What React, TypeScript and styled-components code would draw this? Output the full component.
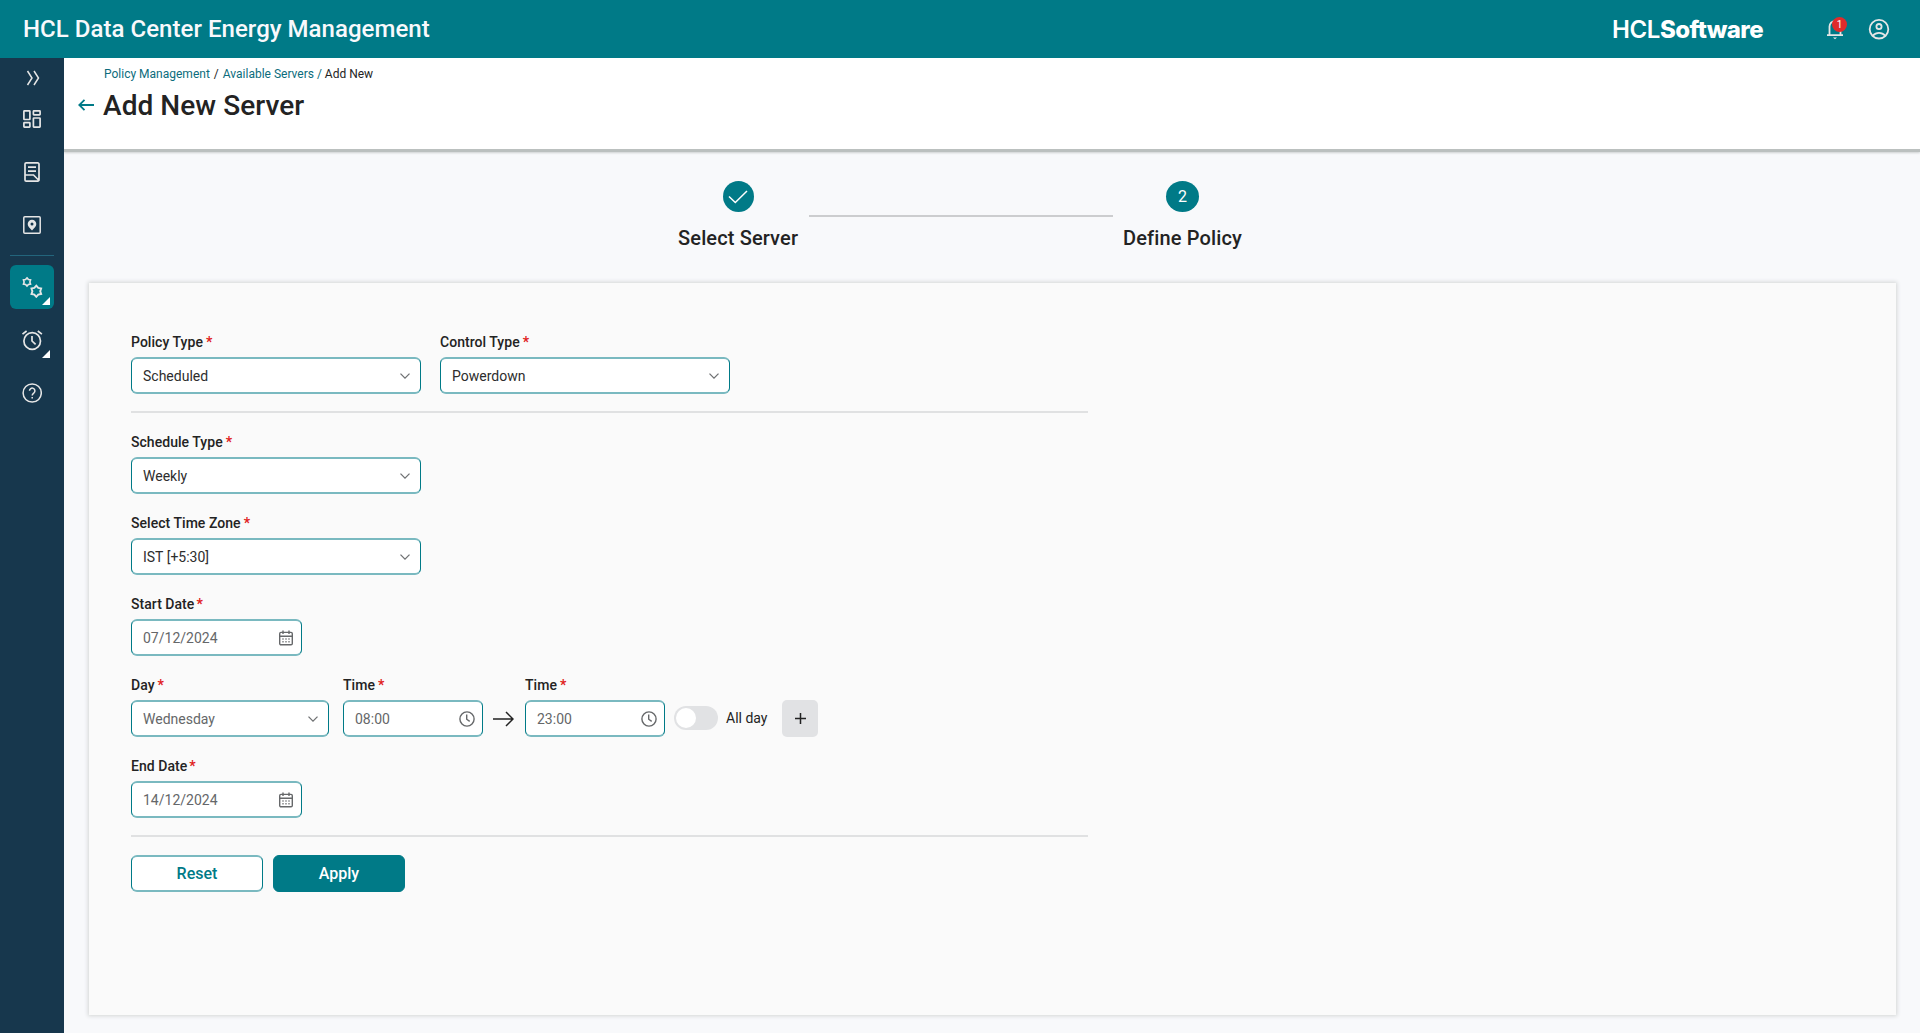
import React from "react";
import styled, { createGlobalStyle } from "styled-components";

const teal = "#007a87";
const edge = "#7ab9c0";

const GlobalStyle = createGlobalStyle`
  *, *::before, *::after { box-sizing: border-box; }
  html, body { margin: 0; padding: 0; }
  body { font-family: Roboto, "Liberation Sans", sans-serif; color: #232323; background: #f8f9fb; }
  button { font-family: inherit; padding: 0; cursor: pointer; }
  svg { display: block; flex: none; }
`;

const Page = styled.div`
  display: flex;
  flex-direction: column;
  width: 1920px;
  height: 1033px;
  overflow: hidden;
`;

const TopBar = styled.header`
  display: flex;
  align-items: center;
  flex: none;
  height: 58px;
  padding: 0 30px 0 23px;
  background: ${teal};
  color: #f8f9fc;
`;

const AppTitle = styled.div`
  flex: 1;
  font-size: 24px;
  line-height: 28px;
  font-weight: 500;
  letter-spacing: 0.04px;
`;

const Brand = styled.div`
  width: 151px;
  margin-right: 61px;
  padding-top: 1px;
  font-family: Inter, sans-serif;
  font-size: 24px;
  line-height: 28px;
  font-weight: 600;
  letter-spacing: -0.4px;
  color: #fff;
  white-space: nowrap;
`;

const BrandStrong = styled.span`
  font-weight: 800;
  letter-spacing: -0.6px;
`;

const BellButton = styled.div`
  position: relative;
  width: 24px;
  height: 24px;
  margin-right: 20px;
`;

const Badge = styled.span`
  position: absolute;
  left: 8px;
  top: 0;
  width: 15px;
  height: 15px;
  border-radius: 50%;
  background: #e02b2b;
  color: #fff;
  font-size: 10px;
  line-height: 15px;
  text-align: center;
`;

const Body = styled.div`
  display: flex;
  flex: 1;
  min-height: 0;
`;

const Sidebar = styled.nav`
  position: relative;
  z-index: 1;
  display: flex;
  flex-direction: column;
  align-items: center;
  flex: none;
  width: 64px;
  padding-top: 10px;
  background: #17374d;
`;

const ExpandItem = styled.div`
  display: flex;
  align-items: center;
  justify-content: center;
  width: 44px;
  height: 20px;
  margin-bottom: 9px;
  padding-left: 2px;
`;

const NavItem = styled.div<{ $active?: boolean }>`
  position: relative;
  display: flex;
  align-items: center;
  justify-content: center;
  width: 44px;
  height: 44px;
  margin-bottom: 9px;
  border-radius: 6px;
  background: ${(p) => (p.$active ? teal : "transparent")};
`;

const SubmenuMark = styled.span`
  position: absolute;
  right: 4px;
  bottom: 4px;
  width: 8px;
  height: 8px;
  background: #fff;
  clip-path: polygon(100% 0, 100% 100%, 0 100%);
`;

const NavDivider = styled.div`
  width: 44px;
  height: 1px;
  margin: -1px 0 9px;
  background: #23657c;
`;

const Main = styled.main`
  display: flex;
  flex-direction: column;
  flex: 1;
  min-width: 0;
`;

const PageHeader = styled.div`
  flex: none;
  height: 91px;
  padding: 8px 15px 0 14px;
  background: #fff;
  box-shadow: 0 3px 0 #bbc0bf, 0 4px 2px #cdd1d1;
`;

const Crumbs = styled.div`
  display: flex;
  padding-left: 26px;
  font-size: 12px;
  line-height: 16px;
`;

const CrumbLink = styled.a`
  color: #0c6c7c;
  white-space: pre;
`;

const Crumb = styled.span`
  white-space: pre;
`;

const CrumbSlash = styled.span`
  margin: 0 4px;
`;

const TitleRow = styled.div`
  display: flex;
  align-items: center;
  gap: 9px;
  height: 34px;
  margin-top: 6px;
`;

const PageTitle = styled.h1`
  margin: 0;
  padding-top: 1px;
  font-size: 28px;
  line-height: 34px;
  font-weight: 500;
  letter-spacing: 0.06px;
`;

const Stepper = styled.div`
  display: flex;
  justify-content: center;
  flex: none;
  margin-top: 32px;
  padding-right: 64px;
`;

const Step = styled.div`
  display: flex;
  flex-direction: column;
  align-items: center;
`;

const StepCircle = styled.div<{ $size: number }>`
  display: flex;
  align-items: center;
  justify-content: center;
  width: ${(p) => p.$size}px;
  height: 31px;
  border-radius: 50%;
  background: ${teal};
  color: #fff;
  font-size: 16px;
`;

const StepLabel = styled.div`
  margin-top: 14px;
  font-size: 20px;
  line-height: 24px;
  font-weight: 500;
  letter-spacing: 0.13px;
  white-space: nowrap;
`;

const StepLine = styled.div`
  width: 304px;
  height: 2px;
  margin: 34px 10px 0 11px;
  background: #cccdcf;
`;

const Card = styled.section`
  flex: none;
  height: 732px;
  margin: 33px 24px 0 25px;
  padding: 50px 42px 0;
  background: #fafafa;
  box-shadow: 0 0 4px 1px #d3d5d6;
`;

const Form = styled.form`
  display: flex;
  flex-direction: column;
  width: 957px;
`;

const Row = styled.div<{ $after?: number }>`
  display: flex;
  align-items: flex-end;
  margin-bottom: ${(p) => p.$after ?? 20}px;
`;

const Field = styled.div<{ $width: number; $gap?: number }>`
  display: flex;
  flex-direction: column;
  width: ${(p) => p.$width}px;
  margin-right: ${(p) => p.$gap ?? 0}px;
`;

const Label = styled.label`
  height: 24px;
  font-size: 14px;
  line-height: 18px;
  font-weight: 500;
  letter-spacing: 0.04px;
`;

const Star = styled.span<{ $offset: number }>`
  margin-left: ${(p) => p.$offset}px;
  color: #e02020;
  font-weight: 700;
`;

const Control = styled.div<{ $muted?: boolean; $end: number }>`
  display: flex;
  align-items: center;
  justify-content: space-between;
  height: 37px;
  padding: 0 ${(p) => p.$end}px 0 11px;
  border: solid;
  border-width: 2px 1px;
  border-color: ${edge} ${teal};
  border-radius: 6px;
  background: #fff;
  color: ${(p) => (p.$muted ? "#656769" : "#2d2d2d")};
  font-size: 14px;
`;

const Rule = styled.div<{ $after: number }>`
  height: 2px;
  margin-bottom: ${(p) => p.$after}px;
  background: #e0e1e2;
`;

const Inline = styled.div<{ $gap: number; $lift?: number }>`
  display: flex;
  align-items: center;
  height: 37px;
  margin-right: ${(p) => p.$gap}px;
  padding-bottom: ${(p) => p.$lift ?? 0}px;
  font-size: 14px;
`;

const Toggle = styled.div`
  width: 44px;
  height: 24px;
  padding: 2px;
  border-radius: 12px;
  background: #e1e2e4;
`;

const Knob = styled.div`
  width: 20px;
  height: 20px;
  border-radius: 50%;
  background: #fff;
`;

const AddButton = styled.button`
  display: flex;
  align-items: center;
  justify-content: center;
  width: 36px;
  height: 37px;
  border: 0;
  border-radius: 5px;
  background: #e1e2e4;
`;

const Actions = styled.div`
  display: flex;
  gap: 10px;
`;

const Action = styled.button<{ $primary?: boolean }>`
  width: 132px;
  height: 37px;
  border: solid;
  border-width: ${(p) => (p.$primary ? "1px" : "2px 1px")};
  border-color: ${(p) => (p.$primary ? teal : `${edge} ${teal}`)};
  border-radius: 6px;
  background: ${(p) => (p.$primary ? teal : "#fff")};
  color: ${(p) => (p.$primary ? "#fff" : teal)};
  font-size: 16px;
  font-weight: 500;
`;

const Icon = ({ w, h = w, sw = 1.5, color = "#e6e6e6", children }: {
  w: number; h?: number; sw?: number; color?: string; children: React.ReactNode;
}) => (
  <svg width={w} height={h} viewBox={`0 0 ${w} ${h}`} fill="none" stroke={color} strokeWidth={sw}>
    {children}
  </svg>
);

const gearPath = (cx: number, cy: number, r: number) => {
  const pts: string[] = [];
  for (let i = 0; i < 12; i++) {
    const a = (Math.PI / 6) * i - Math.PI / 2;
    const rad = i % 2 === 0 ? r : r * 0.7;
    pts.push(`${(cx + rad * Math.cos(a)).toFixed(2)} ${(cy + rad * Math.sin(a)).toFixed(2)}`);
  }
  return `M${pts.join("L")}Z`;
};

const Chevron = () => (
  <Icon w={10} h={6} sw={1.3} color="#6f7173"><path d="M.5.6 5 5.1 9.5.6" /></Icon>
);

const CalendarIcon = () => (
  <Icon w={14} h={16} sw={1.4} color="#66686a">
    <rect x=".7" y="2.4" width="12.6" height="12.4" rx="1.3" />
    <path d="M.7 6.2h12.6M4 .5v3.4M10 .5v3.4" />
    <path d="M3.4 9h1.2M6.4 9h1.2M9.4 9h1.2M3.4 11.8h1.2M6.4 11.8h1.2M9.4 11.8h1.2" />
  </Icon>
);

const ClockIcon = () => (
  <Icon w={16} sw={1.4} color="#66686a"><circle cx="8" cy="8" r="7.1" /><path d="M7.7 3.6v4.6l3 2.2" /></Icon>
);

const SelectBox = ({ label, value, width = 290, gap, muted }: {
  label: string; value: string; width?: number; gap?: number; muted?: boolean;
}) => (
  <Field $width={width} $gap={gap}>
    <Label>{label}<Star $offset={3}>*</Star></Label>
    <Control $muted={muted} $end={10}>{value}<Chevron /></Control>
  </Field>
);

const DateBox = ({ label, value }: { label: string; value: string }) => (
  <Field $width={171}>
    <Label>{label}<Star $offset={2}>*</Star></Label>
    <Control $muted $end={8}>{value}<CalendarIcon /></Control>
  </Field>
);

const TimeBox = ({ value, gap }: { value: string; gap: number }) => (
  <Field $width={140} $gap={gap}>
    <Label>Time<Star $offset={3}>*</Star></Label>
    <Control $muted $end={7}>{value}<ClockIcon /></Control>
  </Field>
);

export default function App() {
  return (
    <Page>
      <GlobalStyle />
      <TopBar>
        <AppTitle>HCL Data Center Energy Management</AppTitle>
        <Brand>HCL<BrandStrong>Software</BrandStrong></Brand>
        <BellButton>
          <Icon w={24} sw={1.8}><path d="M3 18.2h16M5.5 18V9.6a5.5 5.5 0 0 1 11 0V18" /><path d="M9 20.4h4l-2 1.8z" fill="#e6e6e6" stroke="none" /></Icon>
          <Badge>1</Badge>
        </BellButton>
        <Icon w={22} sw={1.8}>
          <circle cx="11" cy="11.2" r="9.3" /><circle cx="11" cy="8.6" r="2.6" />
          <path d="M4.8 17.6c1.8-2 3.8-2.8 6.2-2.8s4.4.8 6.2 2.8" />
        </Icon>
      </TopBar>
      <Body>
        <Sidebar>
          <ExpandItem>
            <Icon w={14} h={16} sw={1.5}><path d="M1.5 1 6 8l-4.5 7M8 1l4.5 7L8 15" /></Icon>
          </ExpandItem>
          <NavItem>
            <Icon w={18} sw={1.7}>
              <rect x=".9" y=".9" width="6" height="8.6" rx=".5" /><rect x="10.4" y=".9" width="6.7" height="3.9" rx=".5" />
              <rect x=".9" y="12.7" width="6" height="4.4" rx=".5" /><rect x="10.4" y="8" width="6.7" height="9.1" rx=".5" />
            </Icon>
          </NavItem>
          <NavItem>
            <Icon w={16} h={20} sw={1.7}>
              <path d="M2.2.9h11.600a1.200 1.200 0 0 1 1.200 1.200v15.800a1.200 1.200 0 0 1-1.200 1.200H2.200A1.200 1.200 0 0 1 1 17.900V2.100A1.200 1.200 0 0 1 2.200.9ZM1 13h8.500l5.500 5.500M4 5.200h8M4 9.200h8" />
            </Icon>
          </NavItem>
          <NavItem>
            <Icon w={18}>
              <rect x=".8" y=".8" width="16.4" height="16.4" rx="1" />
              <path fillRule="evenodd" fill="#e6e6e6" stroke="none" d="M9 14.5C6.200 11.800 4.700 9.900 4.700 8a4.300 4.300 0 0 1 8.600 0c0 1.900-1.500 3.800-4.300 6.500Zm0-5.100a1.500 1.500 0 1 0 0-3 1.500 1.500 0 0 0 0 3Z" />
            </Icon>
          </NavItem>
          <NavDivider />
          <NavItem $active>
            <Icon w={22} sw={1.6}>
              <path d={gearPath(6, 6, 4.1)} />
              <path d={gearPath(15.3, 15.2, 5.6)} strokeWidth="1.9" />
            </Icon>
            <SubmenuMark />
          </NavItem>
          <NavItem>
            <Icon w={22} sw={1.7}>
              <circle cx="11.2" cy="12" r="8.3" /><path d="M11 7v5l3.6 3.4M1.5 5.2 5.6 2M20.9 5.2 16.8 2" />
            </Icon>
            <SubmenuMark />
          </NavItem>
          <NavItem>
            <Icon w={20}>
              <circle cx="10.2" cy="10" r="9.1" /><path d="M7.5 7.8a2.7 2.7 0 1 1 4.5 2c-1.1.9-1.8 1.3-1.8 2.7M10.2 14v1.5" />
            </Icon>
          </NavItem>
        </Sidebar>
        <Main>
          <PageHeader>
            <Crumbs>
              <CrumbLink>Policy Management</CrumbLink><CrumbSlash>/</CrumbSlash>
              <CrumbLink>{"Available Servers / "}</CrumbLink><Crumb>Add New</Crumb>
            </Crumbs>
            <TitleRow>
              <Icon w={16} h={12} sw={1.8} color={teal}><path d="M16 6H1.5M6.5.8 1.3 6l5.2 5.2" /></Icon>
              <PageTitle>Add New Server</PageTitle>
            </TitleRow>
          </PageHeader>
          <Stepper>
            <Step>
              <StepCircle $size={31}><Icon w={20} h={14} color="#fff"><path d="m1 6.5 6.3 6L19 1" /></Icon></StepCircle>
              <StepLabel>Select Server</StepLabel>
            </Step>
            <StepLine />
            <Step>
              <StepCircle $size={33}>2</StepCircle>
              <StepLabel>Define Policy</StepLabel>
            </Step>
          </Stepper>
          <Card>
            <Form>
              <Row $after={17}>
                <SelectBox label="Policy Type" value="Scheduled" gap={19} />
                <SelectBox label="Control Type" value="Powerdown" />
              </Row>
              <Rule $after={20} />
              <Row><SelectBox label="Schedule Type" value="Weekly" /></Row>
              <Row><SelectBox label="Select Time Zone" value="IST [+5:30]" /></Row>
              <Row><DateBox label="Start Date" value="07/12/2024" /></Row>
              <Row>
                <SelectBox label="Day" value="Wednesday" width={198} gap={14} muted />
                <TimeBox value="08:00" gap={10} />
                <Inline $gap={11}>
                  <Icon w={21} h={16} color="#222"><path d="M0 8h20M13 1l7 7-7 7" /></Icon>
                </Inline>
                <TimeBox value="23:00" gap={9} />
                <Inline $gap={8} $lift={2}><Toggle><Knob /></Toggle></Inline>
                <Inline $gap={15} $lift={2}>All day</Inline>
                <AddButton type="button"><Icon w={11} color="#222"><path d="M0 5.5h11M5.5 0v11" /></Icon></AddButton>
              </Row>
              <Row $after={17}><DateBox label="End Date" value="14/12/2024" /></Row>
              <Rule $after={18} />
              <Actions>
                <Action type="button">Reset</Action>
                <Action type="button" $primary>Apply</Action>
              </Actions>
            </Form>
          </Card>
        </Main>
      </Body>
    </Page>
  );
}
